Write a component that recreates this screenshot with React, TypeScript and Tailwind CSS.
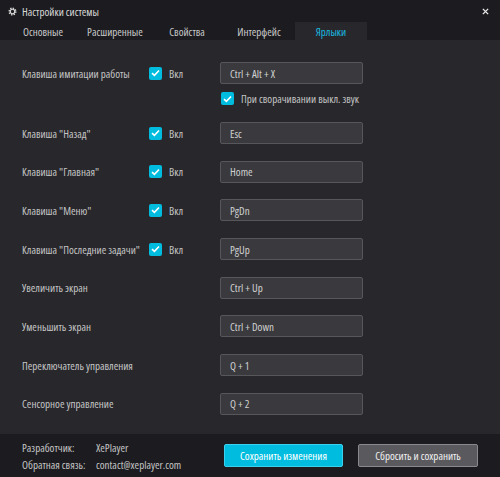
import React from "react";

function Check() {
  return (
    <div className="w-[13px] h-[13px] rounded-[2px] bg-[#00bde0] flex items-center justify-center shrink-0">
      <svg width="9" height="8" viewBox="0 0 9 8">
        <path d="M1 4.2 L3.4 6.4 L8 1.5" stroke="#ffffff" strokeWidth="1.6" fill="none" />
      </svg>
    </div>
  );
}

function KeyBox({ value }: { value: string }) {
  return (
    <div className="w-[143px] h-[22px] bg-[#3a3a3e] border border-[#56565b] rounded-[2px] flex items-center pl-[9px] text-[11px] text-[#d0d0d0]">
      {value}
    </div>
  );
}

type Row = { label: string; check?: boolean; value: string };

const rows: Row[] = [
  { label: 'Клавиша "Назад"', check: true, value: "Esc" },
  { label: 'Клавиша "Главная"', check: true, value: "Home" },
  { label: 'Клавиша "Меню"', check: true, value: "PgDn" },
  { label: 'Клавиша "Последние задачи"', check: true, value: "PgUp" },
  { label: "Увеличить экран", value: "Ctrl + Up" },
  { label: "Уменьшить экран", value: "Ctrl + Down" },
  { label: "Переключатель управления", value: "Q + 1" },
  { label: "Сенсорное управление", value: "Q + 2" },
];

function RowView({ r }: { r: Row }) {
  return (
    <div className="flex items-center h-[22px] pl-[22px]">
      <div className="w-[127px] text-[11px] text-[#c4c4c4] whitespace-nowrap">{r.label}</div>
      <div className="w-[71px] flex items-center gap-[7px]">
        {r.check && (
          <>
            <Check />
            <span className="text-[11px] text-[#c4c4c4]">Вкл</span>
          </>
        )}
      </div>
      <KeyBox value={r.value} />
    </div>
  );
}

const tabs = ["Основные", "Расширенные", "Свойства", "Интерфейс", "Ярлыки"];

export default function App() {
  return (
    <div className="w-[500px] h-[477px] bg-[#28282c] flex flex-col font-['Open_Sans',sans-serif] [font-stretch:75%] leading-none">
      <div className="h-[22px] bg-[#1c1c20] flex items-center pl-[8px] pr-[11px]">
        <svg width="9" height="9" viewBox="0 0 10 10" className="mr-[5px]">
          <circle cx="5" cy="5" r="3.6" fill="none" stroke="#d8d8d8" strokeWidth="1.8" strokeDasharray="1.5 1.3" />
          <circle cx="5" cy="5" r="2.5" fill="none" stroke="#d8d8d8" strokeWidth="1.3" />
        </svg>
        <span className="text-[11px] text-[#d8d8d8] flex-1">Настройки системы</span>
        <svg width="7" height="7" viewBox="0 0 8 8">
          <path d="M1 1 L7 7 M7 1 L1 7" stroke="#e8e8e8" strokeWidth="1.6" />
        </svg>
      </div>
      <div className="h-[18px] bg-[#1c1c20] flex pl-[7px]">
        {tabs.map((t, i) => (
          <div
            key={t}
            className={
              i === 4
                ? "w-[72px] flex items-center justify-center text-[11px] text-[#19b8e0] bg-[#28282c]"
                : "w-[72px] flex items-center justify-center text-[11px] text-[#c8c8c8]"
            }
          >
            {t}
          </div>
        ))}
      </div>
      <div className="flex-1 flex flex-col pt-[22px]">
        <div className="flex items-center h-[22px] pl-[22px]">
          <div className="w-[127px] text-[11px] text-[#c4c4c4] whitespace-nowrap">Клавиша имитации работы</div>
          <div className="w-[71px] flex items-center gap-[7px]">
            <Check />
            <span className="text-[11px] text-[#c4c4c4]">Вкл</span>
          </div>
          <KeyBox value="Ctrl + Alt + X" />
        </div>
        <div className="flex items-center gap-[7px] pl-[221px] mt-[8px] h-[13px]">
          <Check />
          <span className="text-[11px] text-[#c4c4c4]">При сворачивании выкл. звук</span>
        </div>
        <div className="flex flex-col gap-[16.7px] mt-[17px]">
          {rows.map((r) => (
            <RowView key={r.label} r={r} />
          ))}
        </div>
      </div>
      <div className="h-[43px] bg-[#1c1c20] flex items-center pl-[22px]">
        <div className="flex flex-col gap-[6px] text-[11px] text-[#c4c4c4] w-[202px]">
          <div className="flex">
            <span className="w-[74px]">Разработчик:</span>
            <span>XePlayer</span>
          </div>
          <div className="flex">
            <span className="w-[74px]">Обратная связь:</span>
            <span>contact@xeplayer.com</span>
          </div>
        </div>
        <div className="w-[119px] h-[23px] bg-[#00bde0] border border-[#3bd0ee] rounded-[2px] flex items-center justify-center text-[11px] text-white">
          Сохранить изменения
        </div>
        <div className="ml-[15px] w-[120px] h-[23px] bg-[#5a5a5e] border border-[#8a8a8e] rounded-[2px] flex items-center justify-center text-[11px] text-[#f0f0f0]">
          Сбросить и сохранить
        </div>
      </div>
    </div>
  );
}
